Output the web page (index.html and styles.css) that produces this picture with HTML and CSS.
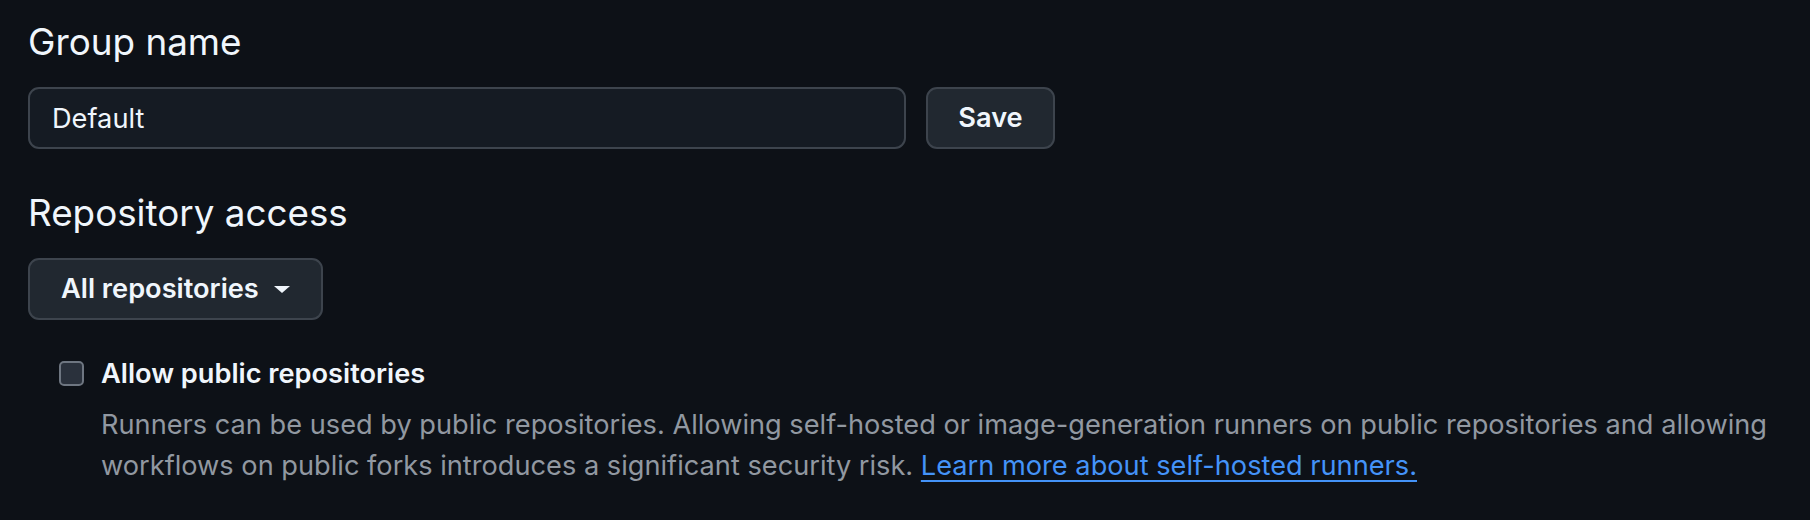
FILE: index.html
```html
<!DOCTYPE html>
<html lang="en">
<head>
<meta charset="utf-8">
<title>Runner group settings</title>
<link rel="stylesheet" href="styles.css">
</head>
<body>
<main class="page">
  <h2 class="subhead">Group name</h2>
  <div class="name-row">
    <input class="text-input" type="text" value="Default" aria-label="Group name">
    <button class="btn btn-save" type="button">Save</button>
  </div>

  <h2 class="subhead subhead-second">Repository access</h2>
  <button class="btn btn-menu" type="button">
    <span>All repositories</span>
    <svg class="caret" viewBox="0 0 16 7" width="16" height="7" aria-hidden="true"><path d="M0 0h16L8 7z" fill="currentColor"/></svg>
  </button>

  <div class="check-row">
    <span class="checkbox" role="checkbox" aria-checked="false"></span>
    <div class="check-body">
      <div class="check-label">Allow public repositories</div>
      <p class="check-note">Runners can be used by public repositories. Allowing self-hosted or image-generation runners on public repositories and allowing workflows on public forks introduces a significant security risk. <a class="link" href="#">Learn more about self-hosted runners.</a></p>
    </div>
  </div>
</main>
</body>
</html>
```

FILE: styles.css
```css
* { box-sizing: border-box; }
html, body { margin: 0; background: #0d1117; }
body {
  font-family: Inter, "Liberation Sans", Arial, sans-serif;
  color: #f0f6fc;
  font-size: 27.2px;
  line-height: 41.5px;
}
.page { padding: 13px 28px 0; }
.subhead {
  margin: 0 0 16px;
  font-size: 36.8px;
  font-weight: 400;
  line-height: 58px;
  color: #f0f6fc;
}
.subhead-second { margin-top: 35px; }
.name-row { display: flex; gap: 20px; align-items: center; }
.text-input {
  width: 878px;
  height: 62px;
  padding: 0 22px;
  border: 2px solid #3d444d;
  border-radius: 11px;
  background: #151b23;
  color: #f0f6fc;
  font: inherit;
  outline: none;
}
.btn {
  display: flex;
  align-items: center;
  height: 62px;
  padding: 0 31px;
  border: 2px solid #3d444d;
  border-radius: 11px;
  background: #212830;
  color: #f0f6fc;
  font: inherit;
  font-weight: 600;
  white-space: nowrap;
}
.btn-save { width: 129px; justify-content: center; padding: 0; }
.btn-menu { gap: 15px; }
.caret { display: block; flex: none; }
.check-row { display: flex; gap: 17px; margin: 33px 0 0 31px; }
.checkbox {
  flex: none;
  width: 25px;
  height: 25px;
  margin-top: 8px;
  border: 2px solid #6e7681;
  border-radius: 5px;
  background: #2a313c;
}
.check-label { font-weight: 600; }
.check-note { margin: 9px 0 0; color: #9198a1; }
.link {
  color: #4493f8;
  text-decoration: underline;
  text-decoration-thickness: 2px;
  text-underline-offset: 5px;
}
```
